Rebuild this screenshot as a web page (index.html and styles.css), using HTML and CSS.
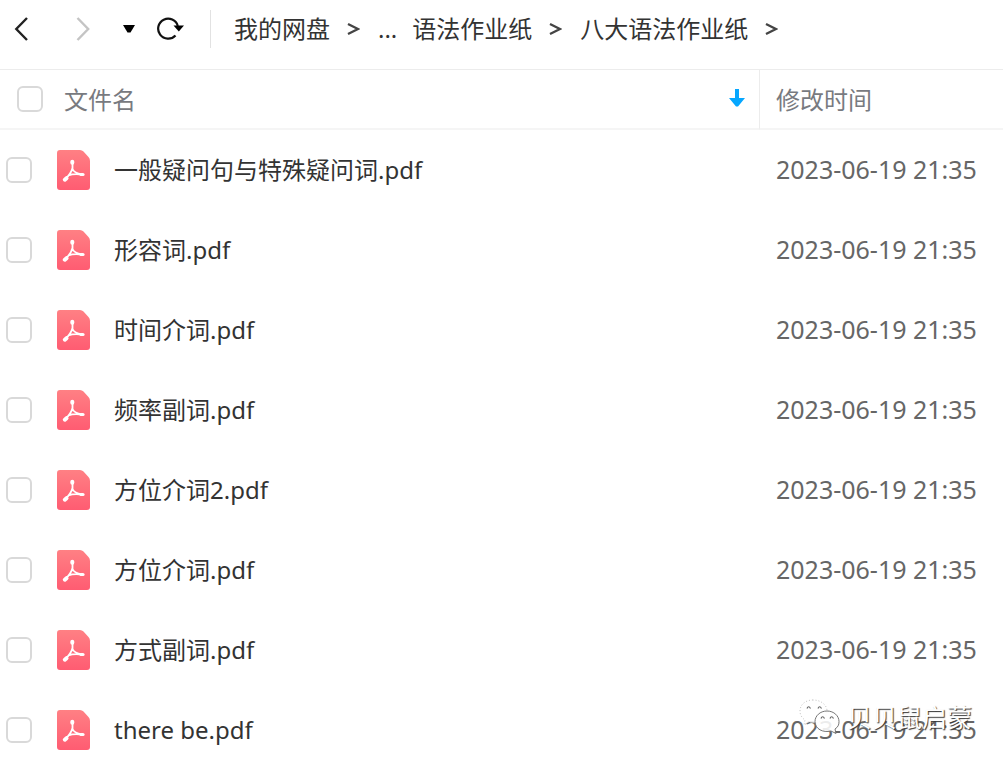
FILE: index.html
```html
<!DOCTYPE html>
<html lang="zh-CN">
<head>
<meta charset="utf-8">
<title>我的网盘</title>
<link rel="stylesheet" href="styles.css">
</head>
<body>
<svg class="defs" aria-hidden="true">
  <defs>
    <linearGradient id="pdf-fill" x1="0" y1="0" x2="0" y2="1">
      <stop offset="0" stop-color="#ff8084"/>
      <stop offset="1" stop-color="#ff5c72"/>
    </linearGradient>
    <symbol id="pdf" viewBox="0 0 33 40">
      <path fill="url(#pdf-fill)" d="M3 0H23Q25 0 26.500 1.500L31.500 7Q33 8.500 33 11V37Q33 40 30 40H3Q0 40 0 37V3Q0 0 3 0Z"/>
      <g fill="none" stroke="#fff" stroke-linecap="round" stroke-linejoin="round">
        <path stroke-width="1.800" d="M15.500 12L15.500 19Q17 23 25 24.500M15.500 18Q14.500 23 8 29.500M11.500 25.500Q16 23.500 25 24.500"/>
        <path stroke-width="4" d="M15.300 11.800V12.800M7.800 29.700L9.500 28.200"/>
        <path stroke-width="3.200" d="M24 24.500H26"/>
      </g>
    </symbol>
    <symbol id="sep" viewBox="0 0 13 14">
      <path fill="none" stroke="#444" stroke-width="2.400" d="M1 2L11 7L1 12"/>
    </symbol>
  </defs>
</svg>
<main class="app">
  <header class="toolbar">
    <div class="nav">
      <button class="back" aria-label="后退"><svg width="14" height="26" viewBox="0 0 14 26"><path fill="none" stroke="#222" stroke-width="2.400" d="M13 2L2.300 13L13 24"/></svg></button>
      <button class="forward" aria-label="前进"><svg width="14" height="26" viewBox="0 0 14 26"><path fill="none" stroke="#c4c4c4" stroke-width="2.400" d="M1.500 2L12.200 13L1.500 24"/></svg></button>
      <button class="history" aria-label="历史"><svg width="12" height="8" viewBox="0 0 12 8"><path d="M0 0H12L7.500 7.500H4.500Z"/></svg></button>
      <button class="refresh" aria-label="刷新"><svg width="27" height="24" viewBox="0 0 27 24"><path fill="none" stroke="#111" stroke-width="2.200" d="M18.500 18.500A10 10 0 1 1 20.800 9"/><path d="M16.500 8.500H27L21.800 14.500Z"/></svg></button>
    </div>
    <nav class="crumbs" aria-label="路径">
      <a href="#">我的网盘</a><svg class="sep"><use href="#sep"/></svg>
      <a href="#">...</a><a href="#" class="next">语法作业纸</a><svg class="sep"><use href="#sep"/></svg>
      <a href="#">八大语法作业纸</a><svg class="sep"><use href="#sep"/></svg>
    </nav>
  </header>
  <table class="files">
    <thead>
      <tr>
        <th class="name"><div class="heading"><input type="checkbox" class="check" aria-label="全选"><span class="label">文件名</span><svg class="sort" width="16" height="20" viewBox="0 0 16 20"><path fill="#06a7ff" d="M6 0H10V9H16L9 17.500H7L0 9H6Z"/></svg></div></th>
        <th class="time">修改时间</th>
      </tr>
    </thead>
    <tbody>
      <tr><td><label class="file"><input type="checkbox" class="check"><svg class="icon"><use href="#pdf"/></svg><span>一般疑问句与特殊疑问词.pdf</span></label></td><td class="time">2023-06-19 21:35</td></tr>
      <tr><td><label class="file"><input type="checkbox" class="check"><svg class="icon"><use href="#pdf"/></svg><span>形容词.pdf</span></label></td><td class="time">2023-06-19 21:35</td></tr>
      <tr><td><label class="file"><input type="checkbox" class="check"><svg class="icon"><use href="#pdf"/></svg><span>时间介词.pdf</span></label></td><td class="time">2023-06-19 21:35</td></tr>
      <tr><td><label class="file"><input type="checkbox" class="check"><svg class="icon"><use href="#pdf"/></svg><span>频率副词.pdf</span></label></td><td class="time">2023-06-19 21:35</td></tr>
      <tr><td><label class="file"><input type="checkbox" class="check"><svg class="icon"><use href="#pdf"/></svg><span>方位介词2.pdf</span></label></td><td class="time">2023-06-19 21:35</td></tr>
      <tr><td><label class="file"><input type="checkbox" class="check"><svg class="icon"><use href="#pdf"/></svg><span>方位介词.pdf</span></label></td><td class="time">2023-06-19 21:35</td></tr>
      <tr><td><label class="file"><input type="checkbox" class="check"><svg class="icon"><use href="#pdf"/></svg><span>方式副词.pdf</span></label></td><td class="time">2023-06-19 21:35</td></tr>
      <tr><td><label class="file"><input type="checkbox" class="check"><svg class="icon"><use href="#pdf"/></svg><span>there be.pdf</span></label></td><td class="time">2023-06-19 21:35</td></tr>
    </tbody>
  </table>
  <div class="watermark">
    <svg width="42" height="36" viewBox="0 0 42 36">
      <g fill="#fff" fill-opacity=".88" stroke-width=".9">
        <path stroke="#bbb" stroke-dasharray="1 2" d="M14 1C6 1 1 6 1 12C1 16 3 19 6 21L5 26L10 23C19 26 28 20 28 12C28 6 22 1 14 1Z"/>
        <path stroke="#666" d="M28 12C21 12 16 17 16 22.500C16 30 24 34 32 32L37 34.500L36 30C39 28 40 26 40 22.500C40 17 35 12 28 12Z"/>
      </g>
      <path fill="none" stroke="#666" stroke-width="1.200" d="M8 9.500Q9.500 6 11.500 9.500M19 9.500Q20.500 6 22.500 9.500M22 19.500Q23.500 16 25.500 19.500M31 19.500Q32.500 16 34.500 19.500"/>
    </svg>
    <span>贝贝鼠启蒙</span>
  </div>
</main>
</body>
</html>
```
FILE: styles.css
```css
* { box-sizing: border-box; }
body {
  margin: 0;
  background: #fff;
  color: #333;
  font: 24px/32px "Noto Sans", "Noto Sans CJK SC", sans-serif;
}
.defs { position: absolute; width: 0; height: 0; }
.app { position: relative; height: 100vh; overflow: hidden; }
svg { display: block; flex: none; }

.toolbar {
  display: flex;
  align-items: center;
  height: 70px;
  padding-bottom: 11px;
  border-bottom: 1px solid #ececec;
}
.nav {
  display: flex;
  align-items: center;
  height: 38px;
  padding: 0 26px 0 14px;
  border-right: 1px solid #e2e2e2;
}
.nav button { padding: 0; border: 0; background: none; }
.forward { margin-left: 48px; }
.history { margin-left: 33px; }
.refresh { margin-left: 22px; }
.crumbs { display: flex; align-items: center; padding-left: 23px; white-space: nowrap; }
.crumbs a { color: #333; text-decoration: none; }
.crumbs .next { margin-left: 15px; }
.sep { width: 13px; height: 14px; margin: 0 18px 0 17px; }

.files { width: 100%; border-collapse: separate; border-spacing: 0; table-layout: fixed; }
th, td { padding: 0; text-align: left; font-weight: 400; }
th { height: 60px; border-bottom: 2px solid #f5f5f5; color: #787a80; }
td { height: 80px; }
.time { width: 244px; padding-left: 17px; white-space: nowrap; }
th.time { border-left: 1px solid #ececec; padding: 2px 0 0 16px; }
td.time { padding-bottom: 2px; color: #666; font-size: 25px; }
.heading { display: flex; align-items: center; padding: 0 14px 0 17px; }
.label { flex: 1; margin-left: 21px; padding-top: 2px; }
.file { display: flex; align-items: center; padding-left: 6px; }
.check {
  appearance: none;
  flex: none;
  width: 26px;
  height: 26px;
  margin: 0;
  border: 2px solid #d9d9d9;
  border-radius: 6px;
  background: #fff;
}
.check:checked { background: #06a7ff; }
.icon { width: 33px; height: 40px; margin: 0 24px 0 25px; }

.watermark {
  position: absolute;
  right: 31px;
  bottom: 28px;
  display: flex;
  align-items: center;
  gap: 6px;
  color: #fff;
  font-size: 25px;
  text-shadow: 1px 1px 1px #333;
}
```
